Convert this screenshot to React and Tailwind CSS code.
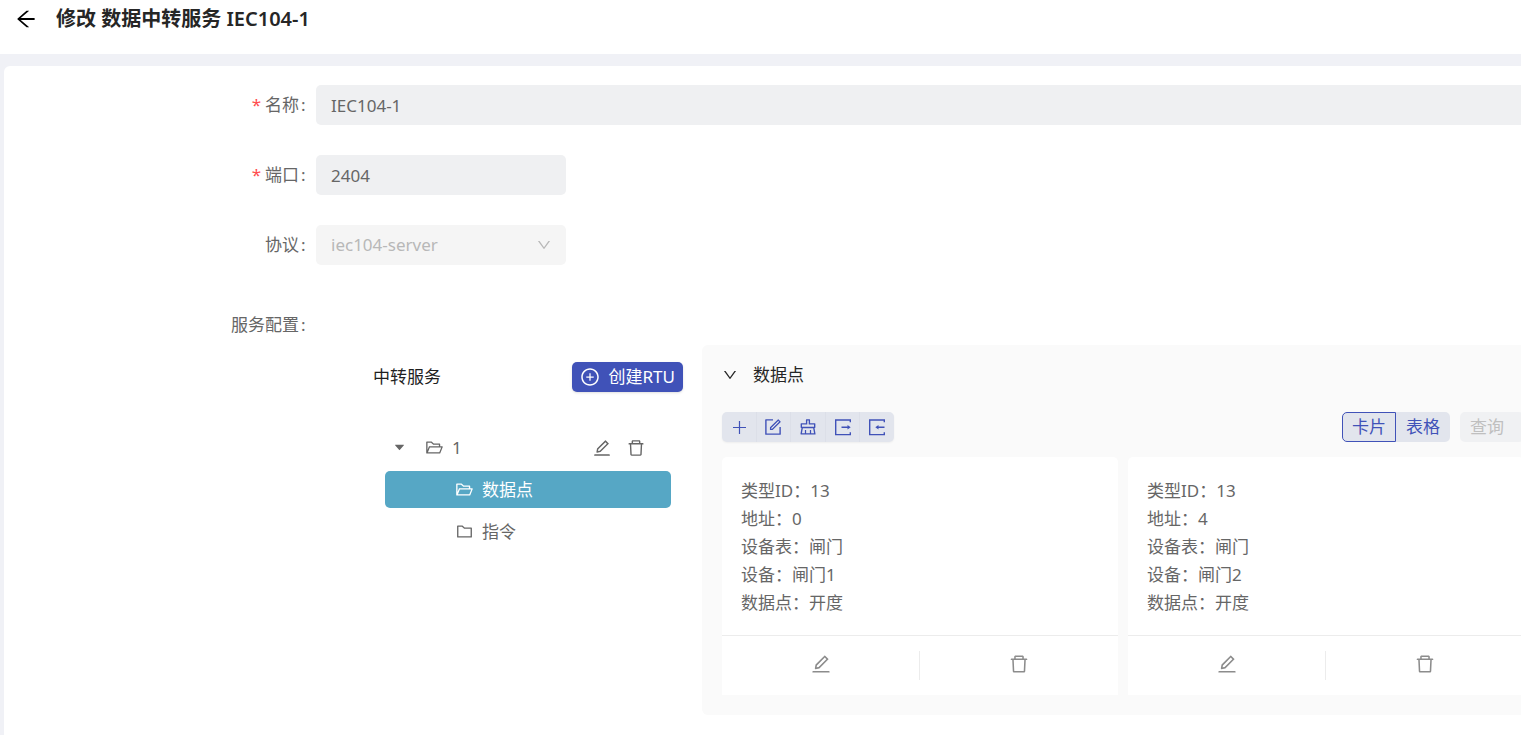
// App.jsx — edit page for a data relay service: basic fields, RTU tree and data point cards.

import {
  AiFillCaretDown,
  AiOutlineArrowLeft,
  AiOutlineClear,
  AiOutlineDelete,
  AiOutlineDown,
  AiOutlineEdit,
  AiOutlineFolder,
  AiOutlineFolderOpen,
  AiOutlineForm,
  AiOutlinePlusCircle,
} from 'react-icons/ai';

function PlusIcon({ size }) {
  return (
    <svg width={size} height={size} viewBox="0 0 20 20" fill="none" stroke="currentColor" strokeWidth="1.2">
      <path d="M10.5 4v13M4 10.5h13" />
    </svg>
  );
}

function ExportIcon({ size }) {
  return (
    <svg width={size} height={size} viewBox="0 0 20 20" fill="none" stroke="currentColor" strokeWidth="1.4">
      <path d="M17.3 5.3V3H2.7v14.6h14.6v-2.3M8.5 10.3h7" />
      <path d="M14.5 8v4.6l3.2-2.3z" fill="currentColor" stroke="none" />
    </svg>
  );
}

function ImportIcon({ size }) {
  return (
    <svg width={size} height={size} viewBox="0 0 20 20" fill="none" stroke="currentColor" strokeWidth="1.4">
      <path d="M17.3 5.3V3H2.7v14.6h14.6v-2.3M10.5 10.3h7" />
      <path d="M11.5 8v4.6l-3.2-2.3z" fill="currentColor" stroke="none" />
    </svg>
  );
}

const TOOLS = [
  { label: '新增', Icon: PlusIcon },
  { label: '编辑', Icon: AiOutlineForm },
  { label: '清空', Icon: AiOutlineClear },
  { label: '导出', Icon: ExportIcon },
  { label: '导入', Icon: ImportIcon },
];

const POINTS = [
  { typeId: 13, address: 0, table: '闸门', device: '闸门1', point: '开度' },
  { typeId: 13, address: 4, table: '闸门', device: '闸门2', point: '开度' },
];

function FieldRow({ label, htmlFor, required, children }) {
  return (
    <div className="flex h-10 items-center gap-2">
      <label htmlFor={htmlFor} className="flex w-[304px] shrink-0 items-center justify-end">
        {required && <span className="mr-1 text-[#ff4d4f]">*</span>}
        <span>{label}</span>
        <span className="ml-0.5 w-[7px]">:</span>
      </label>
      {children}
    </div>
  );
}

function ServiceTree() {
  return (
    <section className="w-[310px] shrink-0 pt-[17px]">
      <div className="flex h-[30px] items-center justify-between">
        <h2 className="text-[#1f1f1f]">中转服务</h2>
        <button type="button" className="flex h-[30px] items-center gap-[9px] rounded-[5px] bg-[#4052b8] px-2 text-white shadow-sm">
          <AiOutlinePlusCircle size={20} />
          创建RTU
        </button>
      </div>

      <ul className="mx-3 mt-[37px] flex flex-col gap-[5px]">
        <li className="flex h-[37px] items-center">
          <button type="button" aria-label="收起" className="ml-2 mr-[19px]">
            <AiFillCaretDown size={13} />
          </button>
          <AiOutlineFolderOpen size={19} />
          <span className="ml-2 flex-1">1</span>
          <button type="button" aria-label="编辑" className="mr-[14px]">
            <AiOutlineEdit size={20} />
          </button>
          <button type="button" aria-label="删除" className="mr-[25px]">
            <AiOutlineDelete size={20} />
          </button>
        </li>
        <li className="flex h-[37px] items-center gap-2 rounded-[5px] bg-[#56a7c5] pl-[70px] text-white">
          <AiOutlineFolderOpen size={19} />
          数据点
        </li>
        <li className="flex h-[37px] items-center gap-2 pl-[70px]">
          <AiOutlineFolder size={19} />
          指令
        </li>
      </ul>
    </section>
  );
}

function PointCard({ item }) {
  return (
    <article className="rounded-t-[5px] bg-white">
      <div className="border-b border-[#ececec] px-[19px] pb-[18px] pt-5 leading-7">
        <p>类型ID：{item.typeId}</p>
        <p>地址：{item.address}</p>
        <p>设备表：{item.table}</p>
        <p>设备：{item.device}</p>
        <p>数据点：{item.point}</p>
      </div>
      <div className="grid grid-cols-2 py-[15px] text-[#8c8c8c]">
        <button type="button" aria-label="编辑" className="flex h-[29px] items-start justify-center border-r border-[#ececec] pt-0.5">
          <AiOutlineEdit size={22} />
        </button>
        <button type="button" aria-label="删除" className="flex h-[29px] items-start justify-center pt-0.5">
          <AiOutlineDelete size={22} />
        </button>
      </div>
    </article>
  );
}

function PointPanel() {
  return (
    <section className="min-w-0 flex-1 rounded-md bg-[#fafafa] px-5 pb-5 pt-[15px]">
      <button type="button" className="flex h-[30px] items-center gap-[15px] text-[#262626]">
        <AiOutlineDown size={16} />
        数据点
      </button>

      <div className="mb-[15px] mt-[22px] flex h-[30px] items-center justify-between">
        <div className="flex h-full w-[172px] divide-x divide-[#dcdfe8] overflow-hidden rounded-[5px] bg-[#e2e5ed] text-[#4052b8] shadow-xs">
          {TOOLS.map(({ label, Icon }) => (
            <button key={label} type="button" aria-label={label} className="flex flex-1 items-center justify-center">
              <Icon size={20} />
            </button>
          ))}
        </div>
        <div className="flex h-full">
          <button type="button" className="w-[54px] rounded-l-[5px] border border-[#4052b8] bg-[#e2e5ed] text-[#4052b8]">
            卡片
          </button>
          <button type="button" className="w-[54px] rounded-r-[5px] bg-[#e2e5ed] text-[#4052b8]">
            表格
          </button>
          <button type="button" disabled className="ml-[10px] w-[64px] rounded-[5px] bg-[#f0f1f3] px-[10px] text-left text-[#bfbfbf]">
            查询
          </button>
        </div>
      </div>

      <div className="grid grid-cols-2 gap-[10px]">
        {POINTS.map((item) => (
          <PointCard key={item.address} item={item} />
        ))}
      </div>
    </section>
  );
}

function App() {
  return (
    <div className="flex min-h-screen flex-col overflow-x-hidden bg-[#f0f1f6] font-['Noto_Sans','Noto_Sans_CJK_SC',sans-serif] text-[17px] text-[#666666]">
      <header className="flex h-[54px] items-start gap-[18px] bg-white pl-[14px] pt-1">
        <a href="#back" aria-label="返回" className="flex h-[30px] items-center text-black">
          <AiOutlineArrowLeft size={24} />
        </a>
        <h1 className="text-[20px] font-semibold leading-[30px] text-[#262626]">修改 数据中转服务 IEC104-1</h1>
      </header>

      <main className="-mr-[23px] ml-1 mt-3 flex-1 rounded-t-md bg-white pb-5 pt-[19px]">
        <form>
          <div className="flex flex-col gap-[30px]">
            <FieldRow label="名称" htmlFor="name" required>
              <input id="name" type="text" readOnly value="IEC104-1" className="h-10 min-w-0 flex-1 rounded-[5px] bg-[#eff0f2] px-[15px]" />
            </FieldRow>
            <FieldRow label="端口" htmlFor="port" required>
              <input id="port" type="text" readOnly value="2404" className="h-10 w-[250px] rounded-[5px] bg-[#eff0f2] px-[15px]" />
            </FieldRow>
            <FieldRow label="协议" htmlFor="protocol">
              <div className="relative">
                <select
                  id="protocol"
                  disabled
                  className="h-10 w-[250px] appearance-none rounded-[5px] bg-[#f5f5f5] px-[15px] text-[#b8b8b8] opacity-100"
                >
                  <option>iec104-server</option>
                </select>
                <AiOutlineDown size={16} className="pointer-events-none absolute right-[14px] top-3 text-[#b8b8b8]" />
              </div>
            </FieldRow>
          </div>
          <div className="mt-10">
            <FieldRow label="服务配置" />
          </div>
        </form>

        <div className="flex gap-[19px] pl-[369px]">
          <ServiceTree />
          <PointPanel />
        </div>
      </main>
    </div>
  );
}

export default App;
